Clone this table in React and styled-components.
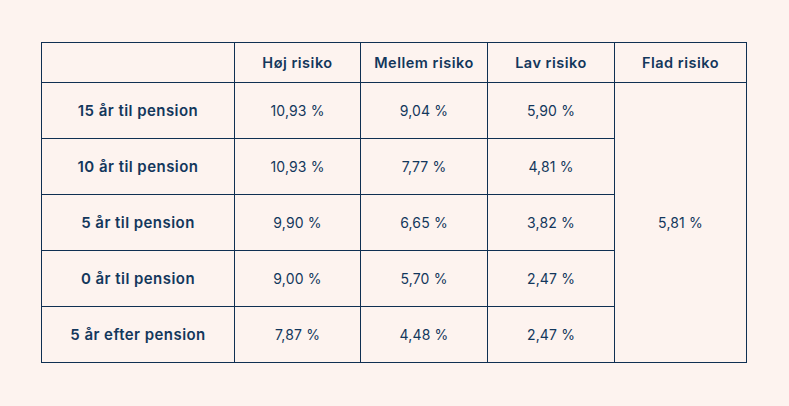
import styled, { createGlobalStyle } from "styled-components";

const GlobalStyle = createGlobalStyle`
  html, body {
    margin: 0;
    background: #fdf3ef;
  }
  body {
    font-family: Inter, "Open Sans", sans-serif;
    color: #13375c;
  }
`;

const rows = [
  { label: "15 år til pension", values: ["10,93 %", "9,04 %", "5,90 %"] },
  { label: "10 år til pension", values: ["10,93 %", "7,77 %", "4,81 %"] },
  { label: "5 år til pension", values: ["9,90 %", "6,65 %", "3,82 %"] },
  { label: "0 år til pension", values: ["9,00 %", "5,70 %", "2,47 %"] },
  { label: "5 år efter pension", values: ["7,87 %", "4,48 %", "2,47 %"] },
];

const headers = ["Høj risiko", "Mellem risiko", "Lav risiko", "Flad risiko"];
const colWidths = [193, 126, 127, 127, 132];

const App = () => {
  return (
    <Page>
      <GlobalStyle />
      <Table>
        <colgroup>
          {colWidths.map((w, i) => (
            <Col key={i} $width={w} />
          ))}
        </colgroup>
        <thead>
          <tr>
            <HeadCell />
            {headers.map((h) => (
              <HeadCell key={h}>{h}</HeadCell>
            ))}
          </tr>
        </thead>
        <tbody>
          {rows.map((row, idx) => (
            <tr key={row.label}>
              <LabelCell>{row.label}</LabelCell>
              {row.values.map((v, i) => (
                <ValueCell key={i}>{v}</ValueCell>
              ))}
              {idx === 0 && <ValueCell rowSpan={rows.length}>5,81 %</ValueCell>}
            </tr>
          ))}
        </tbody>
      </Table>
    </Page>
  );
};

export default App;

const Page = styled.div`
  width: 789px;
  height: 406px;
  padding: 42px 0 0 41px;
  box-sizing: border-box;
`;

const Table = styled.table`
  border-collapse: collapse;
  table-layout: fixed;
  width: 706px;
  border: 1px solid #0f2f52;

  td,
  th {
    border: 1px solid #0f2f52;
    text-align: center;
    vertical-align: middle;
    padding: 0;
  }
`;

const Col = styled.col`
  width: ${(p) => p.$width}px;
`;

const HeadCell = styled.th`
  height: 39px;
  font-size: 14.5px;
  font-weight: 600;
  letter-spacing: 0.5px;
`;

const LabelCell = styled.td`
  height: 55px;
  font-size: 15px;
  font-weight: 600;
  letter-spacing: 0.45px;
`;

const ValueCell = styled.td`
  height: 55px;
  font-size: 14px;
  font-weight: 400;
  letter-spacing: 0.15px;
`;
